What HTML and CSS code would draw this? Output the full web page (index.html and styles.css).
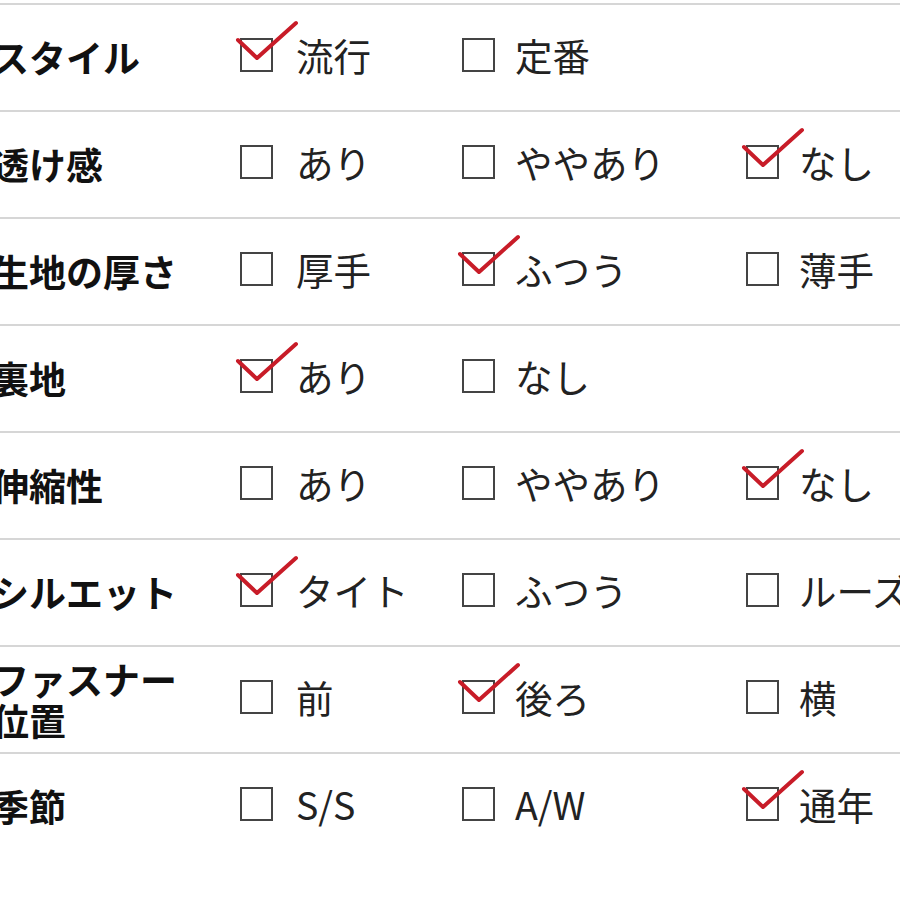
FILE: index.html
```html
<!DOCTYPE html>
<html lang="ja">
<head>
<meta charset="utf-8">
<link rel="stylesheet" href="styles.css">
</head>
<body>
<div class="table">
  <div class="row">
    <div class="label">スタイル</div>
    <div class="opt first checked"><span class="box"><svg class="tick" viewBox="0 0 64 44" width="64" height="44"><polyline points="2,20 21,38 60,3"/></svg></span><span class="txt">流行</span></div>
    <div class="opt"><span class="box"></span><span class="txt">定番</span></div>
    <div class="opt empty"></div>
  </div>
  <div class="row">
    <div class="label">透け感</div>
    <div class="opt first"><span class="box"></span><span class="txt">あり</span></div>
    <div class="opt"><span class="box"></span><span class="txt">ややあり</span></div>
    <div class="opt checked"><span class="box"><svg class="tick" viewBox="0 0 64 44" width="64" height="44"><polyline points="2,20 21,38 60,3"/></svg></span><span class="txt">なし</span></div>
  </div>
  <div class="row">
    <div class="label">生地の厚さ</div>
    <div class="opt first"><span class="box"></span><span class="txt">厚手</span></div>
    <div class="opt checked"><span class="box"><svg class="tick" viewBox="0 0 64 44" width="64" height="44"><polyline points="2,20 21,38 60,3"/></svg></span><span class="txt">ふつう</span></div>
    <div class="opt"><span class="box"></span><span class="txt">薄手</span></div>
  </div>
  <div class="row">
    <div class="label">裏地</div>
    <div class="opt first checked"><span class="box"><svg class="tick" viewBox="0 0 64 44" width="64" height="44"><polyline points="2,20 21,38 60,3"/></svg></span><span class="txt">あり</span></div>
    <div class="opt"><span class="box"></span><span class="txt">なし</span></div>
    <div class="opt empty"></div>
  </div>
  <div class="row">
    <div class="label">伸縮性</div>
    <div class="opt first"><span class="box"></span><span class="txt">あり</span></div>
    <div class="opt"><span class="box"></span><span class="txt">ややあり</span></div>
    <div class="opt checked"><span class="box"><svg class="tick" viewBox="0 0 64 44" width="64" height="44"><polyline points="2,20 21,38 60,3"/></svg></span><span class="txt">なし</span></div>
  </div>
  <div class="row">
    <div class="label">シルエット</div>
    <div class="opt first checked"><span class="box"><svg class="tick" viewBox="0 0 64 44" width="64" height="44"><polyline points="2,20 21,38 60,3"/></svg></span><span class="txt">タイト</span></div>
    <div class="opt"><span class="box"></span><span class="txt">ふつう</span></div>
    <div class="opt"><span class="box"></span><span class="txt">ルーズ</span></div>
  </div>
  <div class="row">
    <div class="label">ファスナー<br>位置</div>
    <div class="opt first"><span class="box"></span><span class="txt">前</span></div>
    <div class="opt checked"><span class="box"><svg class="tick" viewBox="0 0 64 44" width="64" height="44"><polyline points="2,20 21,38 60,3"/></svg></span><span class="txt">後ろ</span></div>
    <div class="opt"><span class="box"></span><span class="txt">横</span></div>
  </div>
  <div class="row last">
    <div class="label">季節</div>
    <div class="opt first"><span class="box"></span><span class="txt">S/S</span></div>
    <div class="opt"><span class="box"></span><span class="txt">A/W</span></div>
    <div class="opt checked"><span class="box"><svg class="tick" viewBox="0 0 64 44" width="64" height="44"><polyline points="2,20 21,38 60,3"/></svg></span><span class="txt">通年</span></div>
  </div>
</div>
</body>
</html>
```
FILE: styles.css
```css
html, body {
  margin: 0;
  padding: 0;
  background: #ffffff;
  overflow: hidden;
}
body {
  width: 900px;
  height: 900px;
  padding-top: 3px;
  box-sizing: border-box;
  font-family: "Noto Sans CJK JP", "Noto Sans", sans-serif;
  color: #1e1e1e;
}
.table {
  margin-left: -8px;
  width: 920px;
}
.row {
  display: grid;
  grid-template-columns: 248px 222px 284px 1fr;
  align-items: center;
  height: 107px;
  box-sizing: border-box;
  border-top: 2px solid #d6d6d6;
}
.label {
  font-size: 37px;
  font-weight: 700;
  line-height: 41px;
  color: #111;
  white-space: nowrap;
}
.opt {
  display: flex;
  align-items: center;
  gap: 20px;
  white-space: nowrap;
  margin-top: -5px;
}
.opt.first {
  gap: 23px;
}
.box {
  position: relative;
  width: 33px;
  height: 34px;
  box-sizing: border-box;
  border: 2.5px solid #444;
  flex: none;
}
.tick {
  position: absolute;
  left: -6.5px;
  top: -20.5px;
  overflow: visible;
}
.tick polyline {
  fill: none;
  stroke: #c81c28;
  stroke-width: 4;
  stroke-linecap: round;
  stroke-linejoin: round;
}
.txt {
  font-size: 37.5px;
  line-height: 42px;
  font-weight: 400;
  color: #222;
}
```
